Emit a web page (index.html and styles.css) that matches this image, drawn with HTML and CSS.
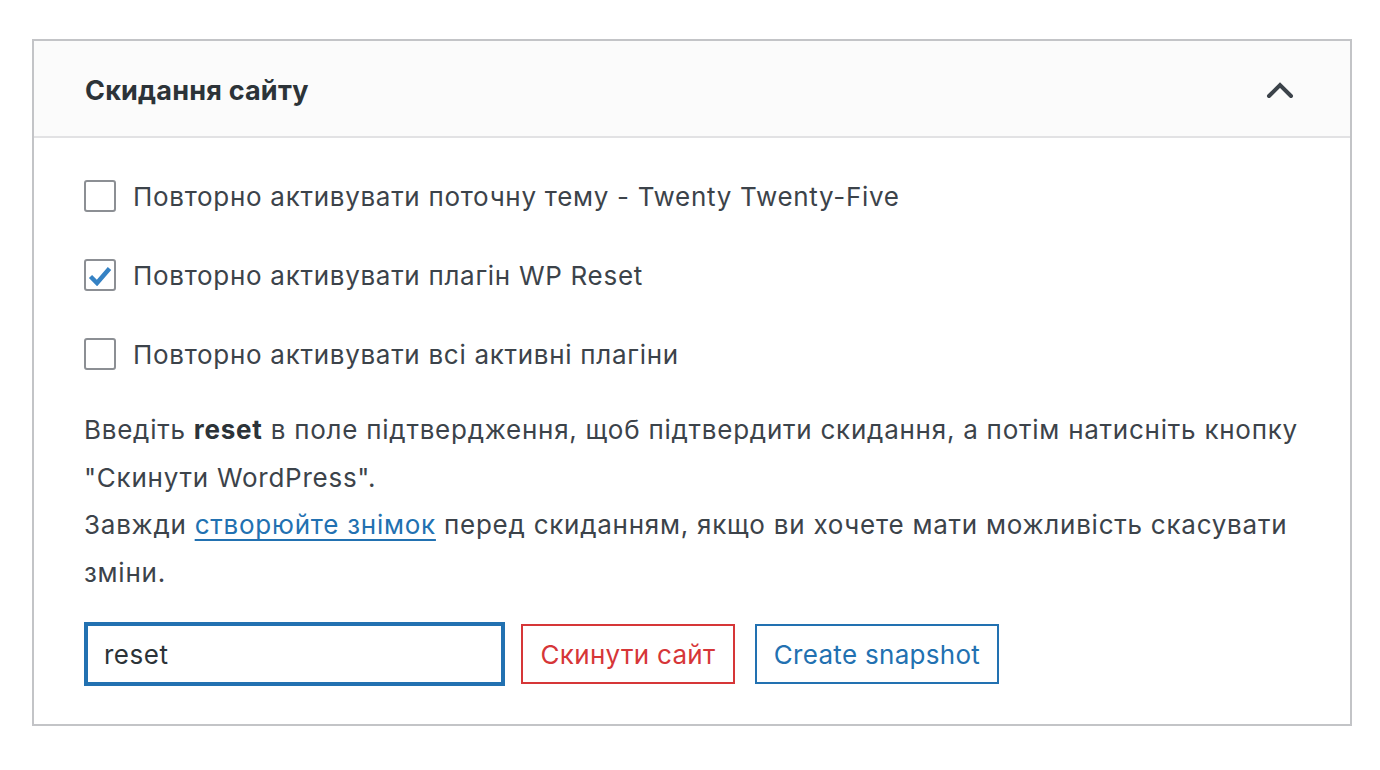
FILE: index.html
```html
<!DOCTYPE html>
<html lang="uk">
<head>
<meta charset="utf-8">
<title>Скидання сайту</title>
<link rel="stylesheet" href="styles.css">
</head>
<body>
<div class="page">
  <div class="postbox">
    <div class="postbox-header">
      <h2 class="hndle">Скидання сайту</h2>
      <button class="toggle" type="button" aria-label="Згорнути">
        <svg width="30" height="18" viewBox="0 0 30 18"><polyline points="3,15 14,4 25,15" fill="none" stroke="#3c434a" stroke-width="4" stroke-linecap="round" stroke-linejoin="miter"/></svg>
      </button>
    </div>
    <div class="inside">
      <label class="opt"><span class="cb"></span><span>Повторно активувати поточну тему - Twenty Twenty-Five</span></label>
      <label class="opt"><span class="cb">
        <svg width="24" height="20" viewBox="0 0 24 20"><path d="M2.5 10.5 L9 17 L21.5 2.5" fill="none" stroke="#3582c4" stroke-width="4.5" stroke-linecap="butt" stroke-linejoin="miter"/></svg>
      </span><span>Повторно активувати плагін WP Reset</span></label>
      <label class="opt"><span class="cb"></span><span>Повторно активувати всі активні плагіни</span></label>
      <p class="desc">Введіть <b>reset</b> в поле підтвердження, щоб підтвердити скидання, а потім натисніть кнопку<br>"Скинути WordPress".<br>Завжди <a href="#">створюйте знімок</a> перед скиданням, якщо ви хочете мати можливість скасувати<br>зміни.</p>
      <div class="actions">
        <div class="input">reset</div>
        <button class="btn btn-danger" type="button">Скинути сайт</button>
        <button class="btn btn-primary" type="button">Create snapshot</button>
      </div>
    </div>
  </div>
</div>
</body>
</html>
```
FILE: styles.css
```css
html, body {
  margin: 0;
  padding: 0;
  background: #ffffff;
}
body {
  font-family: Inter, "Noto Sans", "Liberation Sans", sans-serif;
  color: #3c434a;
}
.page {
  padding: 39px 28px 0 32px;
}
.postbox {
  border: 2px solid #c3c4c7;
  background: #fff;
}
.postbox-header {
  display: flex;
  align-items: center;
  justify-content: space-between;
  height: 95px;
  padding: 0 54px 0 51px;
  background: #fbfbfb;
  border-bottom: 2px solid #e2e2e4;
}
.hndle {
  margin: 4px 0 0 0;
  font-size: 27px;
  font-weight: 700;
  color: #2c3338;
  letter-spacing: 0.2px;
}
.toggle {
  border: 0;
  background: none;
  padding: 0;
  display: flex;
  margin-top: 2px;
}
.inside {
  padding: 42px 50px 38px 50px;
}
.opt {
  display: flex;
  align-items: center;
  height: 32px;
  gap: 17px;
  font-size: 26px;
  letter-spacing: 0.7px;
  margin-bottom: 47px;
}
.opt:nth-of-type(3) {
  margin-bottom: 36px;
}
.cb {
  width: 32px;
  height: 32px;
  box-sizing: border-box;
  border: 2px solid #8c8f94;
  border-radius: 3px;
  background: #fff;
  display: flex;
  align-items: center;
  justify-content: center;
  flex: none;
}
.cb svg {
  display: block;
  margin-top: 1px;
}
.desc {
  margin: 0;
  font-size: 26px;
  line-height: 47.5px;
  letter-spacing: 0.75px;
  white-space: nowrap;
}
.desc b {
  font-weight: 700;
  color: #2c3338;
}
.desc a {
  color: #2271b1;
  text-decoration: underline;
  text-underline-offset: 5px;
  text-decoration-thickness: 2px;
}
.actions {
  display: flex;
  align-items: center;
  margin-top: 26px;
}
.input {
  width: 421px;
  height: 64px;
  flex: none;
  box-sizing: border-box;
  border: 4px solid #2271b1;
  padding: 0 16px;
  display: flex;
  align-items: center;
  font-size: 26px;
  letter-spacing: 0.5px;
  color: #2c3338;
  margin-right: 16px;
}
.btn {
  height: 60px;
  flex: none;
  box-sizing: border-box;
  background: #fff;
  border: 2px solid;
  border-radius: 0;
  font-family: inherit;
  font-size: 26px;
  letter-spacing: 0.3px;
  white-space: nowrap;
  padding: 0;
  text-align: center;
  cursor: pointer;
}
.btn-danger {
  color: #d63638;
  border-color: #d63638;
  width: 214px;
  margin-right: 20px;
}
.btn-primary {
  color: #2271b1;
  border-color: #2271b1;
  width: 244px;
}
```
